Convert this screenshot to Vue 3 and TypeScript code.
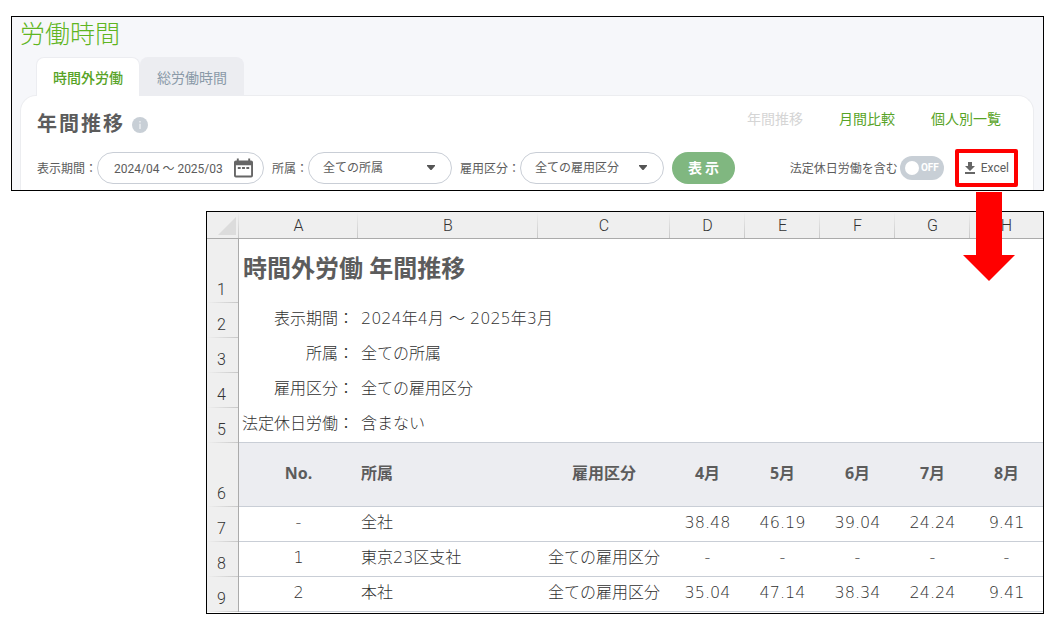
<script setup lang="ts">
import { ref } from 'vue'

const tabs = ['時間外労働', '総労働時間']
const activeTab = ref(0)
const department = ref('全ての所属')
const employment = ref('全ての雇用区分')
const includeHoliday = ref(false)

const columns = ['A', 'B', 'C', 'D', 'E', 'F', 'G', 'H']
const conditions = [
  { no: 2, label: '表示期間：', value: '2024年4月 ～ 2025年3月' },
  { no: 3, label: '所属：', value: '全ての所属' },
  { no: 4, label: '雇用区分：', value: '全ての雇用区分' },
  { no: 5, label: '法定休日労働：', value: '含まない' },
]
const headings = ['No.', '所属', '雇用区分', '4月', '5月', '6月', '7月', '8月']
const records = [
  { no: 7, cells: ['-', '全社', '', '38.48', '46.19', '39.04', '24.24', '9.41'] },
  { no: 8, cells: ['1', '東京23区支社', '全ての雇用区分', '-', '-', '-', '-', '-'] },
  { no: 9, cells: ['2', '本社', '全ての雇用区分', '35.04', '47.14', '38.34', '24.24', '9.41'] },
]
</script>

<template>
  <main class="page">
    <section class="panel">
      <h1 class="title">労働時間</h1>
      <div class="tabs" role="tablist">
        <button
          v-for="(tab, i) in tabs"
          :key="tab"
          type="button"
          role="tab"
          class="tab"
          :class="{ active: i === activeTab }"
          :aria-selected="i === activeTab"
          @click="activeTab = i"
        >{{ tab }}</button>
      </div>
      <div class="card">
        <header class="card-head">
          <h2 class="subtitle">年間推移</h2>
          <svg class="info" viewBox="0 0 16 16" aria-hidden="true">
            <circle cx="8" cy="8" r="8" fill="#c8cfd6" />
            <path d="M7.2 4h1.6v1.500H7.2zM7.2 6.8h1.6V12H7.2z" fill="#e9ecef" />
          </svg>
          <nav class="views">
            <a class="view current" href="#year" aria-current="page">年間推移</a>
            <a class="view" href="#month">月間比較</a>
            <a class="view" href="#person">個人別一覧</a>
          </nav>
        </header>
        <div class="filters">
          <div class="field">
            <label for="period">表示期間：</label>
            <button id="period" type="button" class="pill period">
              <span class="period-text">2024/04 ～ 2025/03</span>
              <svg class="calendar" viewBox="0 0 20 20" aria-hidden="true">
                <path
                  fill="#666"
                  fill-rule="evenodd"
                  d="M3 0h2v2h10V0h2v2h1a2 2 0 0 1 2 2v14a2 2 0 0 1-2 2H2a2 2 0 0 1-2-2V4a2 2 0 0 1 2-2h1zM2 7v11h16V7zM4 9h3v2H4zM8.500 9h3v2h-3zM13 9h3v2h-3z"
                />
              </svg>
            </button>
          </div>
          <div class="field">
            <label for="department">所属：</label>
            <span class="select-box">
              <select id="department" v-model="department" class="pill select">
                <option>全ての所属</option>
              </select>
              <svg class="caret" viewBox="0 0 8 5" aria-hidden="true">
                <path d="M0 0h8v1L4.500 5h-1L0 1z" fill="#555" />
              </svg>
            </span>
          </div>
          <div class="field">
            <label for="employment">雇用区分：</label>
            <span class="select-box">
              <select id="employment" v-model="employment" class="pill select">
                <option>全ての雇用区分</option>
              </select>
              <svg class="caret" viewBox="0 0 8 5" aria-hidden="true">
                <path d="M0 0h8v1L4.500 5h-1L0 1z" fill="#555" />
              </svg>
            </span>
          </div>
          <button type="button" class="show">表示</button>
          <div class="actions">
            <label class="holiday" for="holiday">法定休日労働を含む</label>
            <span class="switch">
              <input id="holiday" v-model="includeHoliday" type="checkbox" role="switch" />
              <span class="switch-text" aria-hidden="true">{{ includeHoliday ? 'ON' : 'OFF' }}</span>
            </span>
            <div class="highlight">
              <button type="button" class="excel">
                <svg class="download" viewBox="0 0 10 12" aria-hidden="true">
                  <path d="M3 0h4v4h3L5 9 0 4h3zM0 10h10v2H0z" fill="#666" />
                </svg>
                <span>Excel</span>
              </button>
            </div>
          </div>
        </div>
      </div>
    </section>

    <section class="sheet">
      <table>
        <colgroup>
          <col class="w-row" />
          <col class="w-a" />
          <col class="w-b" />
          <col class="w-c" />
          <col v-for="n in 4" :key="n" class="w-month" />
          <col />
        </colgroup>
        <thead>
          <tr>
            <td class="corner">
              <svg viewBox="0 0 18 18" aria-hidden="true"><path d="M18 0v18H0z" fill="#dcdcdc" /></svg>
            </td>
            <th v-for="c in columns" :key="c" scope="col" class="letter">{{ c }}</th>
          </tr>
        </thead>
        <tbody>
          <tr class="tall">
            <th scope="row" class="row-no">1</th>
            <td colspan="8" class="sheet-title">時間外労働 年間推移</td>
          </tr>
          <tr v-for="c in conditions" :key="c.no" class="condition-row">
            <th scope="row" class="row-no">{{ c.no }}</th>
            <td class="condition">{{ c.label }}</td>
            <td colspan="7" class="left">{{ c.value }}</td>
          </tr>
          <tr class="tall headings">
            <th scope="row" class="row-no">6</th>
            <th v-for="(h, i) in headings" :key="h" scope="col" :class="{ left: i === 1 }">{{ h }}</th>
          </tr>
          <tr v-for="r in records" :key="r.no" class="record">
            <th scope="row" class="row-no">{{ r.no }}</th>
            <td v-for="(v, i) in r.cells" :key="i" :class="{ left: i === 1 }">{{ v }}</td>
          </tr>
        </tbody>
      </table>
    </section>

    <svg class="arrow" viewBox="0 0 52 89" aria-hidden="true">
      <path d="M13 0h26v63h13L26 89 0 63h13z" fill="#f00" />
    </svg>
  </main>
</template>

<style>
body {
  margin: 0;
  background: #fff;
}
</style>

<style scoped>
.page {
  position: relative;
  box-sizing: border-box;
  padding: 16px 15px 13px 11px;
  font-family: Roboto, "Noto Sans CJK JP", sans-serif;
  color: #5c5c5c;
}
button,
select {
  font-family: inherit;
  color: inherit;
  cursor: pointer;
}
.panel {
  border: 1px solid #000;
  background: #f6f7fa;
}
.title {
  margin: 0 0 4px 8px;
  font-size: 25px;
  line-height: 36px;
  font-weight: 200;
  color: #5fb522;
}
.tabs {
  position: relative;
  display: flex;
  margin: 0 0 -1px 24px;
}
.tab {
  box-sizing: border-box;
  height: 39px;
  padding: 0 16px;
  border: 1px solid #ecedf1;
  border-bottom: 0;
  border-radius: 8px 8px 0 0;
  background: #ecedf1;
  font-size: 14px;
  color: #8a9aa8;
}
.tab.active {
  background: #fff;
  color: #57a326;
  font-weight: 500;
}
.card {
  margin: 0 9px 0 8px;
  padding: 8px 15px 3px 16px;
  border: 1px solid #ecedf0;
  border-bottom: 0;
  border-radius: 16px 16px 0 0;
  background: #fff;
}
.card-head {
  display: flex;
  align-items: flex-start;
  margin-bottom: 5px;
}
.subtitle {
  margin: 0;
  font-size: 20px;
  line-height: 40px;
  font-weight: 700;
  letter-spacing: 2px;
}
.info {
  width: 16px;
  height: 16px;
  margin: 13px 0 0 7px;
}
.views {
  display: flex;
  gap: 36px;
  margin-left: auto;
  padding-right: 17px;
}
.view {
  font-size: 14px;
  line-height: 30px;
  color: #57a326;
  text-decoration: none;
}
.view.current {
  color: #d5d5d5;
}
.filters {
  display: flex;
  align-items: center;
  gap: 8px;
  font-size: 12px;
  white-space: nowrap;
}
.field {
  display: flex;
  align-items: center;
}
.field label,
.holiday,
.period-text {
  padding-bottom: 2px;
}
.pill {
  box-sizing: border-box;
  height: 32px;
  border: 1px solid #c9ced6;
  border-radius: 16px;
  background: #fff;
  font-size: 12px;
}
.period {
  display: flex;
  align-items: center;
  justify-content: space-between;
  width: 167px;
  padding: 0 10px 0 16px;
}
.calendar {
  width: 19px;
  height: 20px;
}
.select-box {
  position: relative;
  display: flex;
}
.select {
  appearance: none;
  width: 144px;
  padding: 0 28px 0 14px;
}
.caret {
  position: absolute;
  right: 17px;
  top: 13px;
  width: 8px;
  height: 5px;
  pointer-events: none;
}
.show {
  height: 32px;
  padding: 0 13px 3px 16px;
  border: 0;
  border-radius: 16px;
  background: #80b780;
  color: #fff;
  font-size: 14px;
  font-weight: 700;
  letter-spacing: 3px;
}
.actions {
  display: flex;
  align-items: center;
  margin-left: auto;
}
.switch {
  position: relative;
  display: flex;
  margin: 0 11px 0 2px;
}
.switch input {
  appearance: none;
  display: flex;
  align-items: center;
  box-sizing: border-box;
  width: 44px;
  height: 24px;
  margin: 0;
  padding: 0 5px;
  border-radius: 12px;
  background: #c8cfd6;
  cursor: pointer;
}
.switch input::before {
  content: "";
  width: 14px;
  height: 14px;
  border-radius: 50%;
  background: #fff;
}
.switch input:checked {
  justify-content: flex-end;
  background: #80b780;
}
.switch-text {
  position: absolute;
  right: 5px;
  top: 0;
  font-size: 10px;
  line-height: 24px;
  font-weight: 700;
  color: #fff;
  pointer-events: none;
}
.switch input:checked + .switch-text {
  right: auto;
  left: 6px;
}
.highlight {
  border: 4px solid #f00;
  border-radius: 2px;
}
.excel {
  display: flex;
  align-items: center;
  gap: 6px;
  height: 30px;
  padding: 0 5px 0 6px;
  border: 0;
  background: #fff;
  font-size: 12px;
}
.download {
  width: 10px;
  height: 12px;
}
.sheet {
  margin: 20px 0 0 195px;
  padding-bottom: 1px;
  border: 1px solid #000;
  background: #fff;
  overflow: hidden;
}
table {
  width: 100%;
  table-layout: fixed;
  border-collapse: separate;
  border-spacing: 0;
  font-family: "DejaVu Sans", "Noto Sans CJK JP", sans-serif;
  font-size: 16px;
  line-height: 24px;
  font-weight: 300;
  color: #303030;
  white-space: nowrap;
}
.w-row { width: 32px; }
.w-a { width: 119px; }
.w-b { width: 180px; }
.w-c { width: 132px; }
.w-month { width: 75px; }
th,
td {
  box-sizing: border-box;
  height: 35px;
  padding: 0 0 4px;
  text-align: center;
  vertical-align: middle;
}
.tall > * {
  height: 64px;
}
.letter,
.corner {
  height: 27px;
  padding: 0;
  border-bottom: 1px solid #ababab;
  background: linear-gradient(#efefef, #c8c8c8) right / 1px 100% no-repeat #efefef;
}
.letter {
  padding-top: 2px;
}
.letter,
.row-no {
  font-family: Roboto, sans-serif;
  font-weight: 300;
  color: #333;
}
.letter:last-child {
  background: #efefef;
}
.corner svg {
  display: block;
  width: 18px;
  height: 18px;
  margin: 2px 3px 0 auto;
}
.row-no {
  padding: 0 2px 1px 0;
  border-right: 1px solid #ababab;
  background: linear-gradient(90deg, #efefef, #c8c8c8) bottom / 100% 1px no-repeat #efefef;
  vertical-align: bottom;
}
.sheet-title {
  padding: 0 0 6px 4px;
  text-align: left;
  font-family: "Noto Sans", "Noto Sans CJK JP", sans-serif;
  font-size: 24px;
  line-height: 36px;
  font-weight: 700;
  color: #5c5c5c;
}
.condition {
  padding-right: 4px;
  text-align: right;
}
.left {
  padding-left: 3px;
  text-align: left;
}
.condition-row:has(+ .headings) > td {
  padding-bottom: 3px;
  border-bottom: 1px solid #c9ced6;
}
.headings > th:not(.row-no) {
  border-bottom: 1px solid #c9ced6;
  background: #ecedf1;
  font-family: "Noto Sans", "Noto Sans CJK JP", sans-serif;
  font-weight: 700;
  color: #5c5c5c;
}
.record > td {
  padding-bottom: 2px;
  border-bottom: 1px solid #c9ced6;
}
.arrow {
  position: absolute;
  right: 44px;
  top: 192px;
  width: 52px;
  height: 89px;
}
</style>
